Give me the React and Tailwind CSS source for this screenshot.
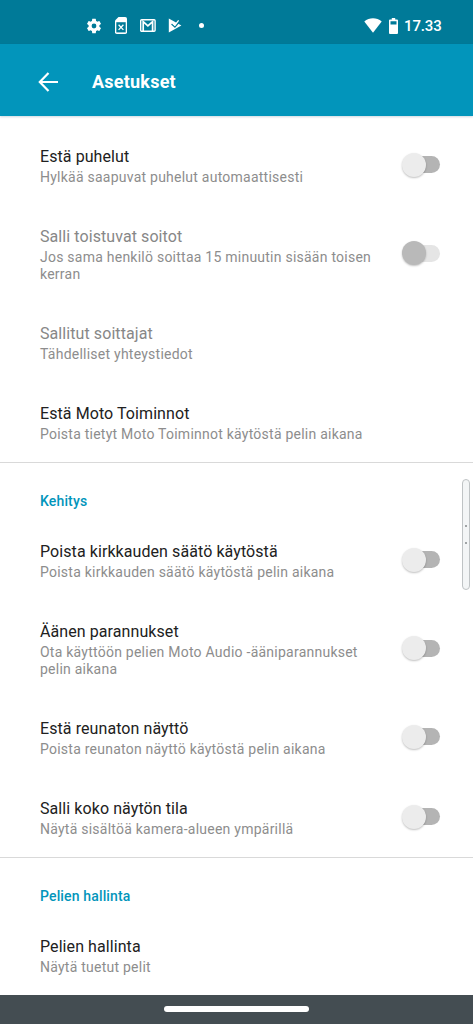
import { useState } from 'react'

const GROUPS = [
  {
    items: [
      { id: 'block', title: 'Estä puhelut', text: 'Hylkää saapuvat puhelut automaattisesti', toggle: true },
      { id: 'repeat', title: 'Salli toistuvat soitot', text: 'Jos sama henkilö soittaa 15 minuutin sisään toisen kerran', toggle: true, disabled: true },
      { id: 'callers', title: 'Sallitut soittajat', text: 'Tähdelliset yhteystiedot', disabled: true },
      { id: 'moto', title: 'Estä Moto Toiminnot', text: 'Poista tietyt Moto Toiminnot käytöstä pelin aikana' },
    ],
  },
  {
    heading: 'Kehitys',
    items: [
      { id: 'brightness', title: 'Poista kirkkauden säätö käytöstä', text: 'Poista kirkkauden säätö käytöstä pelin aikana', toggle: true },
      { id: 'audio', title: 'Äänen parannukset', text: 'Ota käyttöön pelien Moto Audio -ääniparannukset pelin aikana', toggle: true },
      { id: 'edge', title: 'Estä reunaton näyttö', text: 'Poista reunaton näyttö käytöstä pelin aikana', toggle: true },
      { id: 'full', title: 'Salli koko näytön tila', text: 'Näytä sisältöä kamera-alueen ympärillä', toggle: true },
    ],
  },
  {
    heading: 'Pelien hallinta',
    items: [{ id: 'games', title: 'Pelien hallinta', text: 'Näytä tuetut pelit' }],
  },
]

function StatusBar() {
  return (
    <div className="flex h-11 shrink-0 items-center bg-[#007a98] pt-[7px] pr-[31px] pl-[85px] text-white">
      <svg className="size-[18px]" viewBox="0 0 24 24" fill="currentColor">
        <path d="M19.14 12.94c.04-.3.06-.61.06-.94 0-.32-.02-.64-.07-.94l2.03-1.58a.49.49 0 0 0 .12-.61l-1.92-3.32a.488.488 0 0 0-.59-.22l-2.39.96c-.5-.38-1.03-.7-1.62-.94l-.36-2.54a.484.484 0 0 0-.48-.41h-3.84c-.24 0-.43.17-.47.41l-.36 2.54c-.59.24-1.13.57-1.62.94l-2.39-.96c-.22-.08-.47 0-.59.22L2.74 8.87c-.12.21-.08.47.12.61l2.03 1.58c-.05.3-.09.63-.09.94s.02.64.07.94l-2.03 1.58a.49.49 0 0 0-.12.61l1.92 3.32c.12.22.37.29.59.22l2.39-.96c.5.38 1.03.7 1.62.94l.36 2.54c.05.24.24.41.48.41h3.84c.24 0 .44-.17.47-.41l.36-2.54c.59-.24 1.13-.56 1.62-.94l2.39.96c.22.08.47 0 .59-.22l1.92-3.32c.12-.22.07-.47-.12-.61l-2.01-1.58zM12 15.2a3.2 3.2 0 1 1 0-6.4 3.2 3.2 0 0 1 0 6.4z" />
      </svg>
      {/* SIM missing */}
      <svg className="ml-[11px] h-[17px] w-[14px]" viewBox="0 0 14 17" fill="none">
        <path d="M4.5 0H11.2Q13 0 13 1.8V15.2Q13 17 11.2 17H2.8Q1 17 1 15.2V3.5Z" fill="currentColor" />
        <path d="M2.3 5.2H11.7V15.4H2.3Z" fill="#007a98" />
        <path d="M4.6 7.7L9.4 12.9M9.4 7.7L4.6 12.9" stroke="currentColor" strokeWidth="1.3" />
      </svg>
      <svg className="ml-[12px] h-[13px] w-[16px]" viewBox="0 0 16 13" fill="none">
        <rect x="0.7" y="0.7" width="14.4" height="11.6" rx="1" stroke="currentColor" strokeWidth="1.4" />
        <path d="M3.2 12V2.6L7.9 6.9L12.6 2.6V12" stroke="currentColor" strokeWidth="1.7" />
      </svg>
      <svg className="ml-[12px] h-[15px] w-[14px]" viewBox="0 0 14 15">
        <path d="M0.8 0.6L13.4 7.5L0.8 14.4Z" fill="currentColor" />
        <path d="M3.6 6L6.9 9L12 3" fill="none" stroke="#007a98" strokeWidth="1.5" />
        <path d="M4.6 5.2L6.9 7.2L10.6 2.4" fill="none" stroke="currentColor" strokeWidth="1.3" />
      </svg>
      <span className="ml-[17px] size-[5px] rounded-full bg-white" />
      <svg className="ml-auto h-[15px] w-[18px]" viewBox="0 0 18 15" fill="currentColor">
        <path d="M0.3 3.6C5.3-.8 12.7-.8 17.7 3.6L9 14.7Z" />
      </svg>
      <svg className="ml-[7px] h-[16px] w-[9px]" viewBox="0 0 9 16" fill="currentColor">
        <path fillRule="evenodd" d="M2.8 0H6.2V1.5H8Q9 1.5 9 2.5V15Q9 16 8 16H1Q0 16 0 15V2.5Q0 1.5 1 1.5H2.8ZM1.5 3.2V6.6H7.5V3.2Z" />
      </svg>
      <span className="ml-[6px] w-[38px] text-[15px] leading-4 font-medium tracking-[-0.15px]">17.33</span>
    </div>
  )
}

function Toggle({ checked, disabled, onChange }) {
  return (
    <button type="button" role="switch" aria-checked={checked} disabled={disabled} onClick={onChange}
      className="relative flex h-[26px] w-[38px] shrink-0 items-center">
      <span className={`ml-[3px] h-[17px] w-[35px] rounded-full ${disabled ? 'bg-[#e5e5e5]' : 'bg-[#b4b4b4]'}`} />
      <span className={`absolute top-[1px] size-6 rounded-full shadow-[0_1px_2px_rgba(0,0,0,0.25)] ${checked ? 'right-0' : 'left-0'} ${disabled ? 'bg-[#b9b9b9]' : 'bg-[#ececec]'}`} />
    </button>
  )
}

function SettingRow({ item, checked, onToggle }) {
  return (
    <div className="flex items-center pt-5 pb-[19px] pr-[33px] pl-10">
      <div className="w-[335px]">
        <h3 className={`text-[16px] leading-[23px] tracking-[0.08px] ${item.disabled ? 'text-[#878787]' : 'text-[#212121]'}`}>{item.title}</h3>
        <p className="mt-px text-[14px] leading-[17px] tracking-[0.24px] text-[#8d8d8d]">{item.text}</p>
      </div>
      {item.toggle && (
        <div className="ml-auto pb-0.5">
          <Toggle checked={checked} disabled={item.disabled} onChange={onToggle} />
        </div>
      )}
    </div>
  )
}

export default function App() {
  const [enabled, setEnabled] = useState({})

  const toggle = id => setEnabled(prev => ({ ...prev, [id]: !prev[id] }))

  return (
    <div className="relative flex h-[1024px] w-[473px] flex-col overflow-hidden bg-white font-['Roboto',sans-serif]">
      <StatusBar />

      {/* App bar */}
      <header className="z-10 flex h-[72px] shrink-0 items-center bg-[#0295bb] pt-1 pl-[38px] text-white shadow-[0_1px_2px_rgba(0,60,100,0.2)]">
        <button type="button" aria-label="Takaisin">
          <svg className="h-5 w-5" viewBox="0 0 20 20" fill="none" stroke="currentColor" strokeWidth="2.2">
            <path d="M10.5 1L1.8 10L10.5 19M2 10H20" />
          </svg>
        </button>
        <h1 className="ml-[34px] text-[18px] leading-6 font-bold tracking-[0.22px]">Asetukset</h1>
      </header>

      <main className="flex-1 pt-[9px]">
        {GROUPS.map((group, i) => (
          <section key={i} className={i > 0 ? 'border-t border-[#d9d9d9]' : ''}>
            {group.heading && (
              <h2 className="h-[57px] pt-7 pl-10 text-[14px] leading-5 font-medium tracking-[0.15px] text-[#0295bb]">{group.heading}</h2>
            )}
            {group.items.map(item => (
              <SettingRow key={item.id} item={item} checked={!!enabled[item.id]} onToggle={() => toggle(item.id)} />
            ))}
          </section>
        ))}
      </main>

      {/* Edge handle */}
      <div className="absolute top-[479px] right-[3px] flex h-[111px] w-[8px] flex-col items-center justify-center gap-[15px] rounded-full border border-[#bfc3c5] bg-[#f3f5f6]">
        <span className="size-[2px] bg-[#a0a4a6]" />
        <span className="size-[2px] bg-[#a0a4a6]" />
      </div>

      <div className="flex h-[29px] shrink-0 justify-center bg-[#444d52] pt-[11px]">
        <div className="h-[6px] w-[145px] rounded-full bg-white" />
      </div>
    </div>
  )
}
